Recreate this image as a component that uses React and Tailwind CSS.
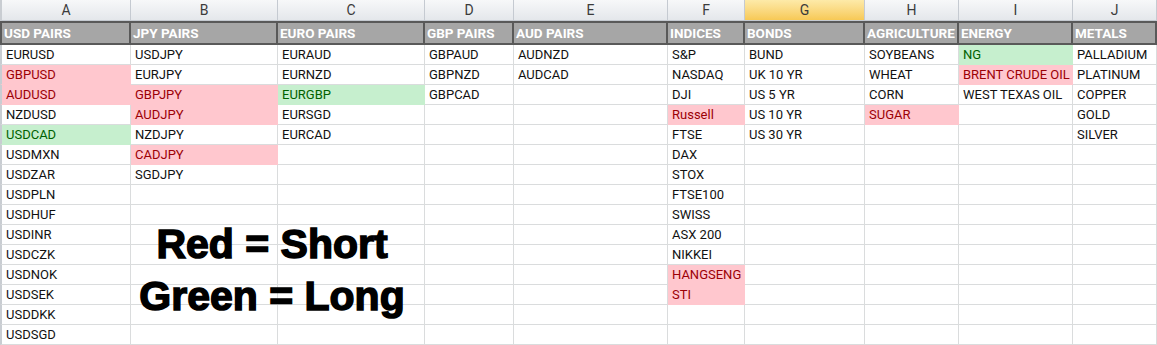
import React from "react";

const R = "r";
const G = "g";

const columns = [
  { letter: "A", head: "USD PAIRS", items: [["EURUSD"], ["GBPUSD", R], ["AUDUSD", R], ["NZDUSD"], ["USDCAD", G], ["USDMXN"], ["USDZAR"], ["USDPLN"], ["USDHUF"], ["USDINR"], ["USDCZK"], ["USDNOK"], ["USDSEK"], ["USDDKK"], ["USDSGD"]] },
  { letter: "B", head: "JPY PAIRS", items: [["USDJPY"], ["EURJPY"], ["GBPJPY", R], ["AUDJPY", R], ["NZDJPY"], ["CADJPY", R], ["SGDJPY"]] },
  { letter: "C", head: "EURO PAIRS", items: [["EURAUD"], ["EURNZD"], ["EURGBP", G], ["EURSGD"], ["EURCAD"]] },
  { letter: "D", head: "GBP PAIRS", items: [["GBPAUD"], ["GBPNZD"], ["GBPCAD"]] },
  { letter: "E", head: "AUD PAIRS", items: [["AUDNZD"], ["AUDCAD"]] },
  { letter: "F", head: "INDICES", items: [["S&P"], ["NASDAQ"], ["DJI"], ["Russell", R], ["FTSE"], ["DAX"], ["STOX"], ["FTSE100"], ["SWISS"], ["ASX 200"], ["NIKKEI"], ["HANGSENG", R], ["STI", R]] },
  { letter: "G", head: "BONDS", items: [["BUND"], ["UK 10 YR"], ["US 5 YR"], ["US 10 YR"], ["US 30 YR"]], selected: true },
  { letter: "H", head: "AGRICULTURE", items: [["SOYBEANS"], ["WHEAT"], ["CORN"], ["SUGAR", R]] },
  { letter: "I", head: "ENERGY", items: [["NG", G], ["BRENT CRUDE OIL", R], ["WEST TEXAS OIL"]] },
  { letter: "J", head: "METALS", items: [["PALLADIUM"], ["PLATINUM"], ["COPPER"], ["GOLD"], ["SILVER"]] },
];

const ROWS = 15;

function DataCell({ item, first }) {
  const text = item ? item[0] : "";
  const kind = item ? item[1] : undefined;
  let cls = "border-[#dadcdd] bg-white text-[#111]";
  if (kind === R) cls = "border-transparent bg-[#ffc7ce] text-[#9c0006]";
  if (kind === G) cls = "border-transparent bg-[#c6efce] text-[#006100]";
  return (
    <div
      className={
        "h-[20px] border-r border-b px-[4px] leading-[20px] text-[13px] whitespace-nowrap overflow-hidden " +
        cls +
        (first ? " border-l-2 border-l-[#c9cdd2]" : "")
      }
    >
      {text}
    </div>
  );
}

export default function App() {
  const cells = [];
  for (let r = 0; r < ROWS; r++) {
    columns.forEach((c, ci) => {
      cells.push(<DataCell key={r + "-" + ci} item={c.items[r]} first={ci === 0} />);
    });
  }
  return (
    <div className="relative w-[1157px] h-[345px] overflow-hidden bg-white font-['Roboto',sans-serif]">
      <div className="grid grid-cols-[131px_147px_147px_89px_154px_77px_120px_94px_114px_84px]">
        {columns.map((c, i) => (
          <div
            key={"l" + c.letter}
            className={
              "h-[21px] flex items-center justify-center text-[14px] text-[#3b3b3b] border-r border-b border-[#c5cad1] bg-gradient-to-b " +
              (c.selected ? "from-[#fdeaa8] to-[#f7c955]" : "from-[#f7f8f9] to-[#e4e7eb]") +
              (i === 0 ? " border-l-2 border-l-[#c9cdd2]" : "")
            }
          >
            {c.letter}
          </div>
        ))}
        {columns.map((c, i) => (
          <div
            key={"h" + c.letter}
            className={
              "h-[24px] flex items-center px-[2px] bg-[#a6a6a6] border-y-2 border-r-2 border-[#595959] text-white font-bold text-[13.5px] whitespace-nowrap overflow-hidden" +
              (i === 0 ? " border-l-2" : "")
            }
          >
            {c.head}
          </div>
        ))}
        {cells}
      </div>
      <div className="absolute left-[132px] top-[218px] w-[280px] text-center font-['Liberation_Sans',Arial,sans-serif] font-bold text-[41px] leading-[52px] text-black [-webkit-text-stroke:1.5px_black]">
        <div>Red = Short</div>
        <div>Green = Long</div>
      </div>
    </div>
  );
}
